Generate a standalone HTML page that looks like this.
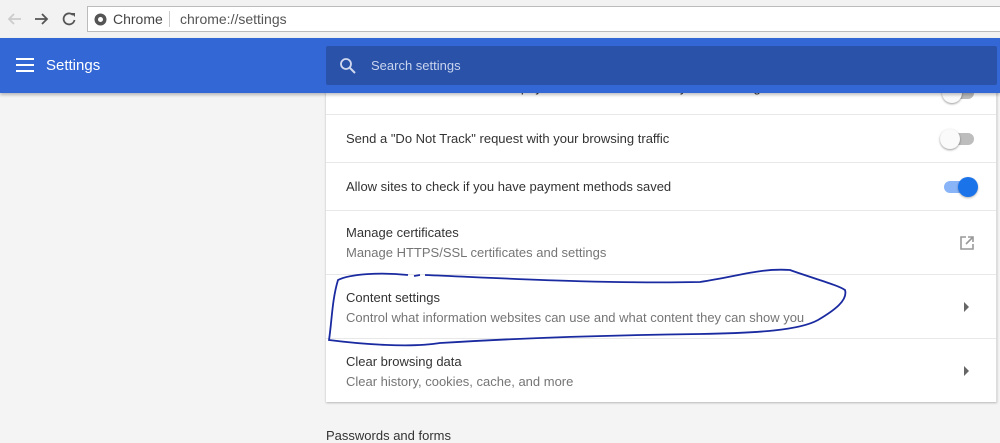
<!DOCTYPE html>
<html><head><style>
body{margin:0;width:1000px;height:439px;overflow:hidden;background:#f4f4f4;font-family:"Liberation Sans",sans-serif;position:relative}
.top{position:absolute;left:0;top:0;width:1000px;height:38px;background:#f2f2f2;border-bottom:1px solid #ccc}
.addr{position:absolute;left:87px;top:6px;width:920px;height:26px;background:#fff;border:1px solid #bbb;box-sizing:border-box;font-size:14px;line-height:24px;color:#333}
.hdr{position:absolute;left:0;top:38px;width:1000px;height:55px;background:#3367d6;box-shadow:0 2px 3px rgba(0,0,0,.25);z-index:2}
.search{position:absolute;left:326px;top:8px;width:671px;height:39px;background:#2a52a8;border-radius:2px}
.card{position:absolute;left:326px;top:60px;width:670px;height:342px;background:#fff;box-shadow:0 1px 2px rgba(0,0,0,.25);border-right:1px solid #ddd}
.row{position:absolute;left:0;width:670px;border-top:1px solid #e8e8e8;box-sizing:border-box}
.t{position:absolute;left:20px;font-size:13px;color:#333}
.s{position:absolute;left:20px;font-size:13px;color:#757575}
.tog{position:absolute;right:22px;width:30px;height:12px;border-radius:6px}
.knob{position:absolute;top:-4px;width:20px;height:20px;border-radius:50%}
</style></head><body>
<div class="top">
<svg style="position:absolute;left:4px;top:10px" width="80" height="18"><path d="M17 9H5M10 4L5 9l5 5" stroke="#ccc" stroke-width="1.8" fill="none"/><path d="M31 9h12M38 4l5 5-5 5" stroke="#555" stroke-width="1.8" fill="none"/><path d="M69 5a5.5 5.5 0 1 0 1.5 5" stroke="#555" stroke-width="1.8" fill="none"/><path d="M67 3h4v4z" fill="#555"/></svg>
<div class="addr"><svg style="position:absolute;left:6px;top:6px" width="13" height="13"><circle cx="6.5" cy="6.5" r="6" fill="#555"/><circle cx="6.5" cy="6.5" r="2.5" fill="#fff"/></svg><span style="position:absolute;left:25px;color:#444">Chrome</span><span style="position:absolute;left:81px;top:4px;width:1px;height:16px;background:#ccc"></span><span style="position:absolute;left:92px;color:#555">chrome://settings</span></div>
</div>
<div class="hdr">
<svg style="position:absolute;left:16px;top:20px" width="18" height="14"><path d="M0 1h18M0 7h18M0 13h18" stroke="#fff" stroke-width="2"/></svg>
<div style="position:absolute;left:46px;top:19px;color:#fff;font-size:15px">Settings</div>
<div class="search"><svg style="position:absolute;left:14px;top:12px" width="16" height="16"><circle cx="6" cy="6" r="5" stroke="#cfd8ee" stroke-width="1.8" fill="none"/><path d="M10 10l5 5" stroke="#cfd8ee" stroke-width="2"/></svg><div style="position:absolute;left:45px;top:12px;color:#c9d4ee;font-size:13px">Search settings</div></div>
</div>
<div class="card">
<div class="row" style="top:0;height:54px;border:0"><div class="t" style="top:20px">Control whether sites can use payment handlers saved in your browsing</div><div class="tog" style="top:27px;background:#bbb"><div class="knob" style="left:-2px;background:#fafafa;box-shadow:0 1px 2px rgba(0,0,0,.4)"></div></div></div>
<div class="row" style="top:54px;height:48px"><div class="t" style="top:16px">Send a "Do Not Track" request with your browsing traffic</div><div class="tog" style="top:18px;background:#bdbdbd"><div class="knob" style="left:-4px;background:#fafafa;box-shadow:0 1px 2px rgba(0,0,0,.4)"></div></div></div>
<div class="row" style="top:102px;height:48px"><div class="t" style="top:16px">Allow sites to check if you have payment methods saved</div><div class="tog" style="top:18px;background:#8ab4f8"><div class="knob" style="left:14px;background:#1a73e8;box-shadow:0 1px 2px rgba(0,0,0,.3)"></div></div></div>
<div class="row" style="top:150px;height:64px"><div class="t" style="top:14px">Manage certificates</div><div class="s" style="top:34px">Manage HTTPS/SSL certificates and settings</div><svg style="position:absolute;left:633px;top:24px" width="16" height="16"><path d="M7 2H2v12h12V9M9 2h5v5M14 2L7 9" stroke="#999" stroke-width="1.6" fill="none"/></svg></div>
<div class="row" style="top:214px;height:64px"><div class="t" style="top:15px">Content settings</div><div class="s" style="top:35px">Control what information websites can use and what content they can show you</div><svg style="position:absolute;left:638px;top:27px" width="6" height="10"><path d="M0 0l5 5-5 5z" fill="#666"/></svg></div>
<div class="row" style="top:278px;height:64px"><div class="t" style="top:15px">Clear browsing data</div><div class="s" style="top:35px">Clear history, cookies, cache, and more</div><svg style="position:absolute;left:638px;top:27px" width="6" height="10"><path d="M0 0l5 5-5 5z" fill="#666"/></svg></div>
</div>
<div style="position:absolute;left:326px;top:428px;font-size:13px;color:#333">Passwords and forms</div>
<svg style="position:absolute;left:0;top:0;z-index:3" width="1000" height="439"><path d="M408 275C380 272 350 274 338 280C332 300 332 320 329 340C360 344 410 348 440 343C520 338 620 335 700 334C760 333 800 330 818 320C835 310 848 300 845 290C838 285 815 279 790 270C760 268 740 276 700 282C600 284 500 278 425 275M420 275L414 276" stroke="#1a2aa0" stroke-width="1.8" fill="none"/></svg>
</body></html>
